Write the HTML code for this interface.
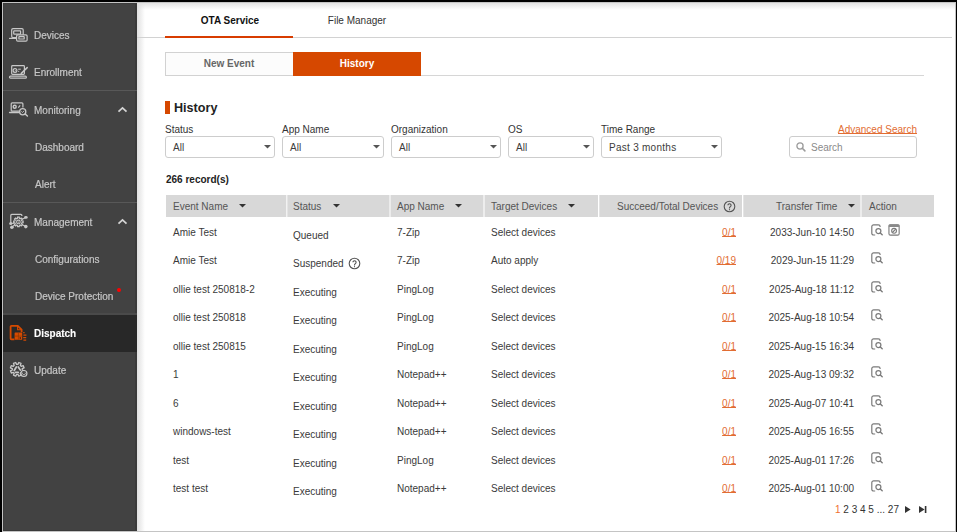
<!DOCTYPE html>
<html><head><meta charset="utf-8">
<style>
*{margin:0;padding:0;box-sizing:border-box}
html,body{width:957px;height:532px;overflow:hidden;background:#000}
body{position:relative;font-family:"Liberation Sans",sans-serif;font-size:10px;line-height:10px}
.a{position:absolute;white-space:nowrap}
.si{position:absolute;left:34px;color:#c6c6c6;white-space:nowrap;will-change:transform;-webkit-text-stroke:0.2px #c6c6c6}
.sep{position:absolute;left:3px;width:134px;height:1px;background:#585858}
.lbl{position:absolute;top:125px;color:#333;white-space:nowrap}
.sel{position:absolute;top:136px;height:22px;border:1px solid #cdcdcd;border-radius:3px;background:#fff}
.sel .t{position:absolute;left:7px;top:6px;color:#3c3c3c;white-space:nowrap}
.th{position:absolute;top:195px;height:22px;background:#d8d8d8}
.tht{position:absolute;top:202px;color:#555;white-space:nowrap}
.td{position:absolute;color:#3a3a3a;white-space:nowrap}
.lnk{position:absolute;color:#e26d33;text-decoration:underline;text-underline-offset:0px;white-space:nowrap}
</style></head><body>
<div class="a" style="left:2px;top:2px;width:954px;height:530px;border:1px solid #c4c4c4;background:#fff"></div>
<div class="a" style="left:3px;top:3px;width:134px;height:528px;background:#424242"></div>
<div class="a" style="left:135px;top:3px;width:2px;height:528px;background:#3a3a3a"></div>
<div class="a" style="left:3px;top:530px;width:134px;height:1px;background:#3a3a3a"></div>
<div class="a" style="left:3px;top:3px;width:134px;height:1px;background:#3c3c3c"></div>
<div class="a" style="left:3px;top:3px;width:1px;height:528px;background:#3c3c3c"></div>
<div class="a" style="left:137px;top:3px;width:818px;height:7px;background:linear-gradient(#e2e2e2,#fff)"></div>
<div class="a" style="left:137px;top:3px;width:8px;height:528px;background:linear-gradient(90deg,#e0e0e0,rgba(255,255,255,0))"></div>

<div class="sep" style="top:90px"></div>
<div class="sep" style="top:202px"></div>
<div class="sep" style="top:313px;height:2px;background:#4a4a4a"></div>
<div class="a" style="left:3px;top:315px;width:134px;height:37px;background:#282828"></div>
<div class="si" style="top:31px;left:34px">Devices</div>
<div class="si" style="top:68px;left:34px">Enrollment</div>
<div class="si" style="top:106px;left:34px">Monitoring</div>
<div class="si" style="top:143px;left:35px">Dashboard</div>
<div class="si" style="top:180px;left:35px">Alert</div>
<div class="si" style="top:218px;left:34px">Management</div>
<div class="si" style="top:255px;left:35px">Configurations</div>
<div class="si" style="top:292px;left:35px">Device Protection</div>
<div class="si" style="top:366px;left:34px">Update</div>
<div class="si" style="top:329px;left:34px;color:#fff;-webkit-text-stroke:0.1px #fff;font-weight:bold">Dispatch</div>
<div class="a" style="left:117px;top:288px;width:4px;height:4px;border-radius:50%;background:#ff0000"></div>
<svg class="a" style="left:8px;top:26px" width="22" height="18" viewBox="0 0 22 18" fill="none" stroke="#c8c8c8" stroke-width="1.2">
<rect x="3.7" y="2.7" width="11.5" height="8.8" rx="1.3"/>
<rect x="5.7" y="4.8" width="6.9" height="3.4" rx="0.6"/>
<path d="M1.6 12.4 H8.4" stroke-linecap="round"/>
<rect x="8.6" y="8.8" width="10.5" height="6.4" rx="1.2" fill="#424242"/>
<rect x="10.9" y="10.6" width="5.3" height="2.4" rx="0.3"/>
</svg>
<svg class="a" style="left:8px;top:62px" width="22" height="18" viewBox="0 0 22 18" fill="none" stroke="#c8c8c8" stroke-width="1.2">
<rect x="3.7" y="3.6" width="12.7" height="8.8" rx="0.8"/>
<rect x="1.5" y="14.2" width="16.9" height="2" rx="1"/>
<circle cx="7" cy="8.6" r="1.9"/>
<path d="M6.2 8.7 l0.7 0.7 l1.1 -1.3" stroke-width="0.8"/>
<path d="M10.2 7.2 H12.8 M10.2 9.4 H11.2" stroke-width="1"/>
<path d="M13.3 11.4 L19.2 5.6" stroke-width="1.5" stroke-linecap="round"/>
</svg>
<svg class="a" style="left:8px;top:99px" width="22" height="19" viewBox="0 0 22 19" fill="none" stroke="#c8c8c8" stroke-width="1.2">
<path d="M11 12.2 H4.2 a1 1 0 0 1 -1 -1 V4.8 a1 1 0 0 1 1 -1 H13.9 a1 1 0 0 1 1 1 V8.4"/>
<path d="M1.6 13.5 H10.6" stroke-width="1.4" stroke-linecap="round"/>
<circle cx="6.7" cy="7.7" r="1.5" stroke-width="1.4"/>
<path d="M10.3 8.6 L12.2 6.4" stroke-width="1.1"/>
<circle cx="14.7" cy="12.7" r="3.1" stroke-width="1.3" fill="#424242"/>
<path d="M13.4 12.4 l1.1 1.1 l1.5 -1.6" stroke-width="0.9"/>
<path d="M17.2 15 L19.4 17" stroke-width="1.5" stroke-linecap="round"/>
</svg>
<svg class="a" style="left:8px;top:211px" width="22" height="20" viewBox="0 0 22 20" fill="none" stroke="#c8c8c8" stroke-width="1.2">
<path d="M2.8 12.4 V4.4 a1 1 0 0 1 1 -1 H12.9 a1 1 0 0 1 1 1 V5"/>
<path d="M13.6 8.4 L17.8 6.4 M13.8 13.4 L17.8 15.6 M7 13.6 L3.9 16.2 M6 12.2 L2.7 12.4" stroke-width="1.1"/>
<g transform="translate(10.4,10.9)">
<path d="M-0.99 -3.46 L-0.83 -4.73 L0.83 -4.73 L0.99 -3.46 L1.75 -3.15 L2.75 -3.93 L3.93 -2.75 L3.15 -1.75 L3.46 -0.99 L4.73 -0.83 L4.73 0.83 L3.46 0.99 L3.15 1.75 L3.93 2.75 L2.75 3.93 L1.75 3.15 L0.99 3.46 L0.83 4.73 L-0.83 4.73 L-0.99 3.46 L-1.75 3.15 L-2.75 3.93 L-3.93 2.75 L-3.15 1.75 L-3.46 0.99 L-4.73 0.83 L-4.73 -0.83 L-3.46 -0.99 L-3.15 -1.75 L-3.93 -2.75 L-2.75 -3.93 L-1.75 -3.15Z" fill="#424242" stroke-width="1.2"/>
<circle cx="0" cy="0" r="1.8" stroke-width="1.1"/>
<circle cx="0" cy="0.2" r="0.6" fill="#c8c8c8" stroke="none"/>
</g>
<ellipse cx="17.9" cy="6.4" rx="1.8" ry="1.4" fill="#c8c8c8" stroke="none"/>
<circle cx="17.8" cy="15.6" r="1.8" fill="#c8c8c8" stroke="none"/>
<circle cx="2.7" cy="12.4" r="1.5" fill="#c8c8c8" stroke="none"/>
<circle cx="3.9" cy="16.2" r="1.8" fill="#c8c8c8" stroke="none"/>
</svg>
<svg class="a" style="left:8px;top:323px" width="22" height="20" viewBox="0 0 22 20" stroke="#d54a00">
<path d="M6.4 16.4 H3.4 a0.8 0.8 0 0 1 -0.8 -0.8 V3.6 a0.8 0.8 0 0 1 0.8 -0.8 H9.8 L13.6 6.6 V9.2" fill="none" stroke-width="1.8"/>
<path d="M9.6 3 V6.8 H13.4" fill="none" stroke-width="1.1"/>
<rect x="6.6" y="9.4" width="7.6" height="7.4" rx="0.6" fill="#d54a00" stroke="none"/>
<path d="M10.4 9.8 V16.6 M7 13.1 H13.8" stroke="#8c3800" stroke-width="0.7" fill="none"/><path d="M11.6 14.2 H13 V15.4 L12.3 16 L11.6 15.4Z" fill="#3a2418" stroke="none"/>
<path d="M15.2 9.6 H16.6 M15.4 12.2 H18.4 M15.2 14.6 H18.2 M15.4 17.2 H18.2" stroke-width="1.2" fill="none"/>
</svg>
<svg class="a" style="left:8px;top:359px" width="22" height="20" viewBox="0 0 22 20" fill="none" stroke="#c8c8c8" stroke-width="1.3">
<g transform="translate(9.25,10.35)">
<path d="M0.65 -4.96 L1.52 -6.83 L3.76 -5.90 L3.04 -3.97 L3.97 -3.04 L5.90 -3.76 L6.83 -1.52 L4.96 -0.65 L4.96 0.65 L6.83 1.52 L5.90 3.76 L3.97 3.04 L3.04 3.97 L3.76 5.90 L1.52 6.83 L0.65 4.96 L-0.65 4.96 L-1.52 6.83 L-3.76 5.90 L-3.04 3.97 L-3.97 3.04 L-5.90 3.76 L-6.83 1.52 L-4.96 0.65 L-4.96 -0.65 L-6.83 -1.52 L-5.90 -3.76 L-3.97 -3.04 L-3.04 -3.97 L-3.76 -5.90 L-1.52 -6.83 L-0.65 -4.96Z" stroke-linejoin="round"/>
<path d="M-3.0 1.2 L-0.9 -2.4" stroke-width="1.7" stroke-linecap="round"/>
<path d="M1.0 -2.4 L3.1 0.8" stroke-width="1.7" stroke-linecap="round"/>
<path d="M-1.7 3.1 L1.0 3.1" stroke-width="1.7" stroke-linecap="round"/>
</g>
<circle cx="15.9" cy="14.5" r="3.0" fill="#424242" stroke-width="1.2"/>
<path d="M14.7 13.7 a1.4 1.4 0 1 0 2.4 0" stroke-width="0.9"/>
</svg>
<svg class="a" style="left:117px;top:105px" width="12" height="8" viewBox="0 0 12 8" fill="none" stroke="#d4d4d4" stroke-width="1.7"><path d="M1.5 6.6 L5.5 2.8 L9.5 6.6"/></svg>
<svg class="a" style="left:117px;top:217px" width="12" height="8" viewBox="0 0 12 8" fill="none" stroke="#d4d4d4" stroke-width="1.7"><path d="M1.5 6.6 L5.5 2.8 L9.5 6.6"/></svg>
<div class="a" style="left:137px;top:37px;width:815px;height:1px;background:#d2d2d2"></div>
<div class="a" style="left:165px;top:36px;width:128px;height:2px;background:#d83c00"></div>
<div class="a" style="left:166px;top:16px;width:128px;text-align:center;font-weight:bold;color:#111">OTA Service</div>
<div class="a" style="left:293px;top:16px;width:128px;text-align:center;color:#333">File Manager</div>
<div class="a" style="left:165px;top:52px;width:128px;height:24px;border:1px solid #d2d2d2;border-right:none;background:#fcfcfc"></div>
<div class="a" style="left:293px;top:52px;width:128px;height:24px;background:#d64800"></div>
<div class="a" style="left:421px;top:75px;width:503px;height:1px;background:#d6d6d6"></div>
<div class="a" style="left:165px;top:59px;width:128px;text-align:center;font-weight:bold;color:#666">New Event</div>
<div class="a" style="left:293px;top:59px;width:128px;text-align:center;font-weight:bold;color:#fff">History</div>
<div class="a" style="left:165px;top:101px;width:5px;height:13px;background:#d64800"></div>
<div class="a" style="left:174px;top:102px;font-size:12.6px;line-height:13px;font-weight:bold;color:#222">History</div>
<div class="lbl" style="left:165px">Status</div>
<div class="sel" style="left:165px;width:110px"><div class="t" style="">All</div></div>
<svg class="a" style="left:264px;top:145px" width="7" height="4" viewBox="0 0 7 4"><path d="M0 0 H7 L3.5 3.6Z" fill="#555"/></svg>
<div class="lbl" style="left:282px">App Name</div>
<div class="sel" style="left:282px;width:102px"><div class="t" style="">All</div></div>
<svg class="a" style="left:373px;top:145px" width="7" height="4" viewBox="0 0 7 4"><path d="M0 0 H7 L3.5 3.6Z" fill="#555"/></svg>
<div class="lbl" style="left:391px">Organization</div>
<div class="sel" style="left:391px;width:110px"><div class="t" style="">All</div></div>
<svg class="a" style="left:490px;top:145px" width="7" height="4" viewBox="0 0 7 4"><path d="M0 0 H7 L3.5 3.6Z" fill="#555"/></svg>
<div class="lbl" style="left:508px">OS</div>
<div class="sel" style="left:508px;width:86px"><div class="t" style="">All</div></div>
<svg class="a" style="left:583px;top:145px" width="7" height="4" viewBox="0 0 7 4"><path d="M0 0 H7 L3.5 3.6Z" fill="#555"/></svg>
<div class="lbl" style="left:601px">Time Range</div>
<div class="sel" style="left:601px;width:121px"><div class="t" style=";letter-spacing:0.27px">Past 3 months</div></div>
<svg class="a" style="left:711px;top:145px" width="7" height="4" viewBox="0 0 7 4"><path d="M0 0 H7 L3.5 3.6Z" fill="#555"/></svg>
<div class="lnk" style="left:838px;top:125px">Advanced Search</div>
<div class="sel" style="left:789px;width:128px"></div>
<svg class="a" style="left:795px;top:142px" width="12" height="11" viewBox="0 0 12 11" fill="none" stroke="#9c9c9c" stroke-width="1.3"><circle cx="5" cy="4" r="3.1"/><path d="M7.3 6.3 L9.9 8.9" stroke-width="1.6" stroke-linecap="round"/></svg>
<div class="a" style="left:811px;top:143px;color:#8a8a8a">Search</div>
<div class="a" style="left:166px;top:175px;font-weight:bold;color:#222">266 record(s)</div>
<div class="th" style="left:166px;width:120px"></div>
<div class="th" style="left:287px;width:102px"></div>
<div class="th" style="left:391px;width:92px"></div>
<div class="th" style="left:485px;width:113px"></div>
<div class="th" style="left:600px;width:142px"></div>
<div class="th" style="left:744px;width:116px"></div>
<div class="th" style="left:862px;width:72px"></div>
<div class="a" style="left:287px;top:195px;width:1px;height:22px;background:#e4e4e4"></div>
<div class="a" style="left:599px;top:195px;width:1px;height:22px;background:#e4e4e4"></div>
<div class="a" style="left:743px;top:195px;width:1px;height:22px;background:#e4e4e4"></div>
<div class="a" style="left:389px;top:195px;width:2px;height:22px;background:#ececec"></div>
<div class="a" style="left:483px;top:195px;width:2px;height:22px;background:#ededed"></div>
<div class="a" style="left:860px;top:195px;width:2px;height:22px;background:#ececec"></div>
<div class="a" style="left:286px;top:195px;width:1px;height:22px;background:#f2f2f2"></div>
<div class="a" style="left:598px;top:195px;width:1px;height:22px;background:#fff"></div>
<div class="a" style="left:742px;top:195px;width:1px;height:22px;background:#fff"></div>
<div class="tht" style="left:173px">Event Name</div>
<svg class="a" style="left:239px;top:204px" width="7" height="4" viewBox="0 0 7 4"><path d="M0 0 H7 L3.5 3.6Z" fill="#333"/></svg>
<div class="tht" style="left:293px">Status</div>
<svg class="a" style="left:333px;top:204px" width="7" height="4" viewBox="0 0 7 4"><path d="M0 0 H7 L3.5 3.6Z" fill="#333"/></svg>
<div class="tht" style="left:397px">App Name</div>
<svg class="a" style="left:455px;top:204px" width="7" height="4" viewBox="0 0 7 4"><path d="M0 0 H7 L3.5 3.6Z" fill="#333"/></svg>
<div class="tht" style="left:491px">Target Devices</div>
<svg class="a" style="left:568px;top:204px" width="7" height="4" viewBox="0 0 7 4"><path d="M0 0 H7 L3.5 3.6Z" fill="#333"/></svg>
<div class="tht" style="left:617px">Succeed/Total Devices</div>
<svg class="a" style="left:723px;top:200px" width="13" height="13" viewBox="0 0 13 13" fill="none" stroke="#555" stroke-width="1.1"><circle cx="6.5" cy="6.5" r="5.3"/><path d="M4.9 5.3 a1.6 1.6 0 1 1 2.4 1.4 c-0.5 0.3 -0.8 0.6 -0.8 1.2 V8.4" stroke-width="1.1"/><circle cx="6.5" cy="9.7" r="0.6" fill="#555" stroke="none"/></svg>
<div class="tht" style="left:776px">Transfer Time</div>
<svg class="a" style="left:848px;top:204px" width="7" height="4" viewBox="0 0 7 4"><path d="M0 0 H7 L3.5 3.6Z" fill="#333"/></svg>
<div class="tht" style="left:869px">Action</div>
<div class="td" style="left:173px;top:228px">Amie Test</div>
<div class="td" style="left:293px;top:231px">Queued</div>
<div class="td" style="left:397px;top:228px">7-Zip</div>
<div class="td" style="left:491px;top:228px">Select devices</div>
<div class="lnk" style="right:221px;top:228px">0/1</div>
<div class="td" style="right:103px;top:228px">2033-Jun-10 14:50</div>
<svg class="a" style="left:870px;top:224px" width="14" height="13" viewBox="0 0 14 13" fill="none" stroke="#7a7a7a" stroke-width="1.2"><path d="M5.2 11.0 H3.6 a1.8 1.8 0 0 1 -1.8 -1.8 V2.6 a1.8 1.8 0 0 1 1.8 -1.8 H8.3 a1.8 1.8 0 0 1 1.8 1.8 V3.0"/><circle cx="8.4" cy="7.1" r="2.5"/><path d="M10.3 9.0 L12.2 10.8" stroke-width="1.4" stroke-linecap="round"/></svg>
<svg class="a" style="left:888px;top:224px" width="13" height="13" viewBox="0 0 13 13" fill="none" stroke="#7a7a7a" stroke-width="1.1"><rect x="0.95" y="0.75" width="10.2" height="10.4" rx="1.5"/><rect x="0.6" y="0.4" width="10.9" height="2.5" rx="1" fill="#8a8a8a" stroke="none"/><circle cx="6.05" cy="6.8" r="2.4"/><path d="M4.4 8.5 L7.7 5.1"/></svg>
<div class="td" style="left:173px;top:256px">Amie Test</div>
<div class="td" style="left:293px;top:259px">Suspended</div>
<svg class="a" style="left:348px;top:257px" width="13" height="13" viewBox="0 0 13 13" fill="none" stroke="#555" stroke-width="1.1"><circle cx="6.5" cy="6.5" r="5.3"/><path d="M4.9 5.3 a1.6 1.6 0 1 1 2.4 1.4 c-0.5 0.3 -0.8 0.6 -0.8 1.2 V8.4" stroke-width="1.1"/><circle cx="6.5" cy="9.7" r="0.6" fill="#555" stroke="none"/></svg>
<div class="td" style="left:397px;top:256px">7-Zip</div>
<div class="td" style="left:491px;top:256px">Auto apply</div>
<div class="lnk" style="right:221px;top:256px">0/19</div>
<div class="td" style="right:103px;top:256px">2029-Jun-15 11:29</div>
<svg class="a" style="left:870px;top:252px" width="14" height="13" viewBox="0 0 14 13" fill="none" stroke="#7a7a7a" stroke-width="1.2"><path d="M5.2 11.0 H3.6 a1.8 1.8 0 0 1 -1.8 -1.8 V2.6 a1.8 1.8 0 0 1 1.8 -1.8 H8.3 a1.8 1.8 0 0 1 1.8 1.8 V3.0"/><circle cx="8.4" cy="7.1" r="2.5"/><path d="M10.3 9.0 L12.2 10.8" stroke-width="1.4" stroke-linecap="round"/></svg>
<div class="td" style="left:173px;top:285px">ollie test 250818-2</div>
<div class="td" style="left:293px;top:288px">Executing</div>
<div class="td" style="left:397px;top:285px">PingLog</div>
<div class="td" style="left:491px;top:285px">Select devices</div>
<div class="lnk" style="right:221px;top:285px">0/1</div>
<div class="td" style="right:103px;top:285px">2025-Aug-18 11:12</div>
<svg class="a" style="left:870px;top:281px" width="14" height="13" viewBox="0 0 14 13" fill="none" stroke="#7a7a7a" stroke-width="1.2"><path d="M5.2 11.0 H3.6 a1.8 1.8 0 0 1 -1.8 -1.8 V2.6 a1.8 1.8 0 0 1 1.8 -1.8 H8.3 a1.8 1.8 0 0 1 1.8 1.8 V3.0"/><circle cx="8.4" cy="7.1" r="2.5"/><path d="M10.3 9.0 L12.2 10.8" stroke-width="1.4" stroke-linecap="round"/></svg>
<div class="td" style="left:173px;top:313px">ollie test 250818</div>
<div class="td" style="left:293px;top:316px">Executing</div>
<div class="td" style="left:397px;top:313px">PingLog</div>
<div class="td" style="left:491px;top:313px">Select devices</div>
<div class="lnk" style="right:221px;top:313px">0/1</div>
<div class="td" style="right:103px;top:313px">2025-Aug-18 10:54</div>
<svg class="a" style="left:870px;top:309px" width="14" height="13" viewBox="0 0 14 13" fill="none" stroke="#7a7a7a" stroke-width="1.2"><path d="M5.2 11.0 H3.6 a1.8 1.8 0 0 1 -1.8 -1.8 V2.6 a1.8 1.8 0 0 1 1.8 -1.8 H8.3 a1.8 1.8 0 0 1 1.8 1.8 V3.0"/><circle cx="8.4" cy="7.1" r="2.5"/><path d="M10.3 9.0 L12.2 10.8" stroke-width="1.4" stroke-linecap="round"/></svg>
<div class="td" style="left:173px;top:342px">ollie test 250815</div>
<div class="td" style="left:293px;top:345px">Executing</div>
<div class="td" style="left:397px;top:342px">PingLog</div>
<div class="td" style="left:491px;top:342px">Select devices</div>
<div class="lnk" style="right:221px;top:342px">0/1</div>
<div class="td" style="right:103px;top:342px">2025-Aug-15 16:34</div>
<svg class="a" style="left:870px;top:338px" width="14" height="13" viewBox="0 0 14 13" fill="none" stroke="#7a7a7a" stroke-width="1.2"><path d="M5.2 11.0 H3.6 a1.8 1.8 0 0 1 -1.8 -1.8 V2.6 a1.8 1.8 0 0 1 1.8 -1.8 H8.3 a1.8 1.8 0 0 1 1.8 1.8 V3.0"/><circle cx="8.4" cy="7.1" r="2.5"/><path d="M10.3 9.0 L12.2 10.8" stroke-width="1.4" stroke-linecap="round"/></svg>
<div class="td" style="left:173px;top:370px">1</div>
<div class="td" style="left:293px;top:373px">Executing</div>
<div class="td" style="left:397px;top:370px">Notepad++</div>
<div class="td" style="left:491px;top:370px">Select devices</div>
<div class="lnk" style="right:221px;top:370px">0/1</div>
<div class="td" style="right:103px;top:370px">2025-Aug-13 09:32</div>
<svg class="a" style="left:870px;top:366px" width="14" height="13" viewBox="0 0 14 13" fill="none" stroke="#7a7a7a" stroke-width="1.2"><path d="M5.2 11.0 H3.6 a1.8 1.8 0 0 1 -1.8 -1.8 V2.6 a1.8 1.8 0 0 1 1.8 -1.8 H8.3 a1.8 1.8 0 0 1 1.8 1.8 V3.0"/><circle cx="8.4" cy="7.1" r="2.5"/><path d="M10.3 9.0 L12.2 10.8" stroke-width="1.4" stroke-linecap="round"/></svg>
<div class="td" style="left:173px;top:399px">6</div>
<div class="td" style="left:293px;top:402px">Executing</div>
<div class="td" style="left:397px;top:399px">Notepad++</div>
<div class="td" style="left:491px;top:399px">Select devices</div>
<div class="lnk" style="right:221px;top:399px">0/1</div>
<div class="td" style="right:103px;top:399px">2025-Aug-07 10:41</div>
<svg class="a" style="left:870px;top:395px" width="14" height="13" viewBox="0 0 14 13" fill="none" stroke="#7a7a7a" stroke-width="1.2"><path d="M5.2 11.0 H3.6 a1.8 1.8 0 0 1 -1.8 -1.8 V2.6 a1.8 1.8 0 0 1 1.8 -1.8 H8.3 a1.8 1.8 0 0 1 1.8 1.8 V3.0"/><circle cx="8.4" cy="7.1" r="2.5"/><path d="M10.3 9.0 L12.2 10.8" stroke-width="1.4" stroke-linecap="round"/></svg>
<div class="td" style="left:173px;top:427px">windows-test</div>
<div class="td" style="left:293px;top:430px">Executing</div>
<div class="td" style="left:397px;top:427px">Notepad++</div>
<div class="td" style="left:491px;top:427px">Select devices</div>
<div class="lnk" style="right:221px;top:427px">0/1</div>
<div class="td" style="right:103px;top:427px">2025-Aug-05 16:55</div>
<svg class="a" style="left:870px;top:423px" width="14" height="13" viewBox="0 0 14 13" fill="none" stroke="#7a7a7a" stroke-width="1.2"><path d="M5.2 11.0 H3.6 a1.8 1.8 0 0 1 -1.8 -1.8 V2.6 a1.8 1.8 0 0 1 1.8 -1.8 H8.3 a1.8 1.8 0 0 1 1.8 1.8 V3.0"/><circle cx="8.4" cy="7.1" r="2.5"/><path d="M10.3 9.0 L12.2 10.8" stroke-width="1.4" stroke-linecap="round"/></svg>
<div class="td" style="left:173px;top:456px">test</div>
<div class="td" style="left:293px;top:459px">Executing</div>
<div class="td" style="left:397px;top:456px">PingLog</div>
<div class="td" style="left:491px;top:456px">Select devices</div>
<div class="lnk" style="right:221px;top:456px">0/1</div>
<div class="td" style="right:103px;top:456px">2025-Aug-01 17:26</div>
<svg class="a" style="left:870px;top:452px" width="14" height="13" viewBox="0 0 14 13" fill="none" stroke="#7a7a7a" stroke-width="1.2"><path d="M5.2 11.0 H3.6 a1.8 1.8 0 0 1 -1.8 -1.8 V2.6 a1.8 1.8 0 0 1 1.8 -1.8 H8.3 a1.8 1.8 0 0 1 1.8 1.8 V3.0"/><circle cx="8.4" cy="7.1" r="2.5"/><path d="M10.3 9.0 L12.2 10.8" stroke-width="1.4" stroke-linecap="round"/></svg>
<div class="td" style="left:173px;top:484px">test test</div>
<div class="td" style="left:293px;top:487px">Executing</div>
<div class="td" style="left:397px;top:484px">Notepad++</div>
<div class="td" style="left:491px;top:484px">Select devices</div>
<div class="lnk" style="right:221px;top:484px">0/1</div>
<div class="td" style="right:103px;top:484px">2025-Aug-01 10:00</div>
<svg class="a" style="left:870px;top:480px" width="14" height="13" viewBox="0 0 14 13" fill="none" stroke="#7a7a7a" stroke-width="1.2"><path d="M5.2 11.0 H3.6 a1.8 1.8 0 0 1 -1.8 -1.8 V2.6 a1.8 1.8 0 0 1 1.8 -1.8 H8.3 a1.8 1.8 0 0 1 1.8 1.8 V3.0"/><circle cx="8.4" cy="7.1" r="2.5"/><path d="M10.3 9.0 L12.2 10.8" stroke-width="1.4" stroke-linecap="round"/></svg>
<div class="a" style="left:835px;top:505px;color:#333"><span style="color:#f07030">1</span> 2 3 4 5 ... 27</div>
<svg class="a" style="left:904px;top:505px" width="8" height="9" viewBox="0 0 8 9"><path d="M1 1 L6.6 4.5 L1 8Z" fill="#333"/></svg>
<svg class="a" style="left:918px;top:505px" width="10" height="9" viewBox="0 0 10 9"><path d="M1 1 L6.6 4.5 L1 8Z" fill="#333"/><rect x="6.8" y="1" width="1.6" height="7" fill="#333"/></svg>
</body></html>
